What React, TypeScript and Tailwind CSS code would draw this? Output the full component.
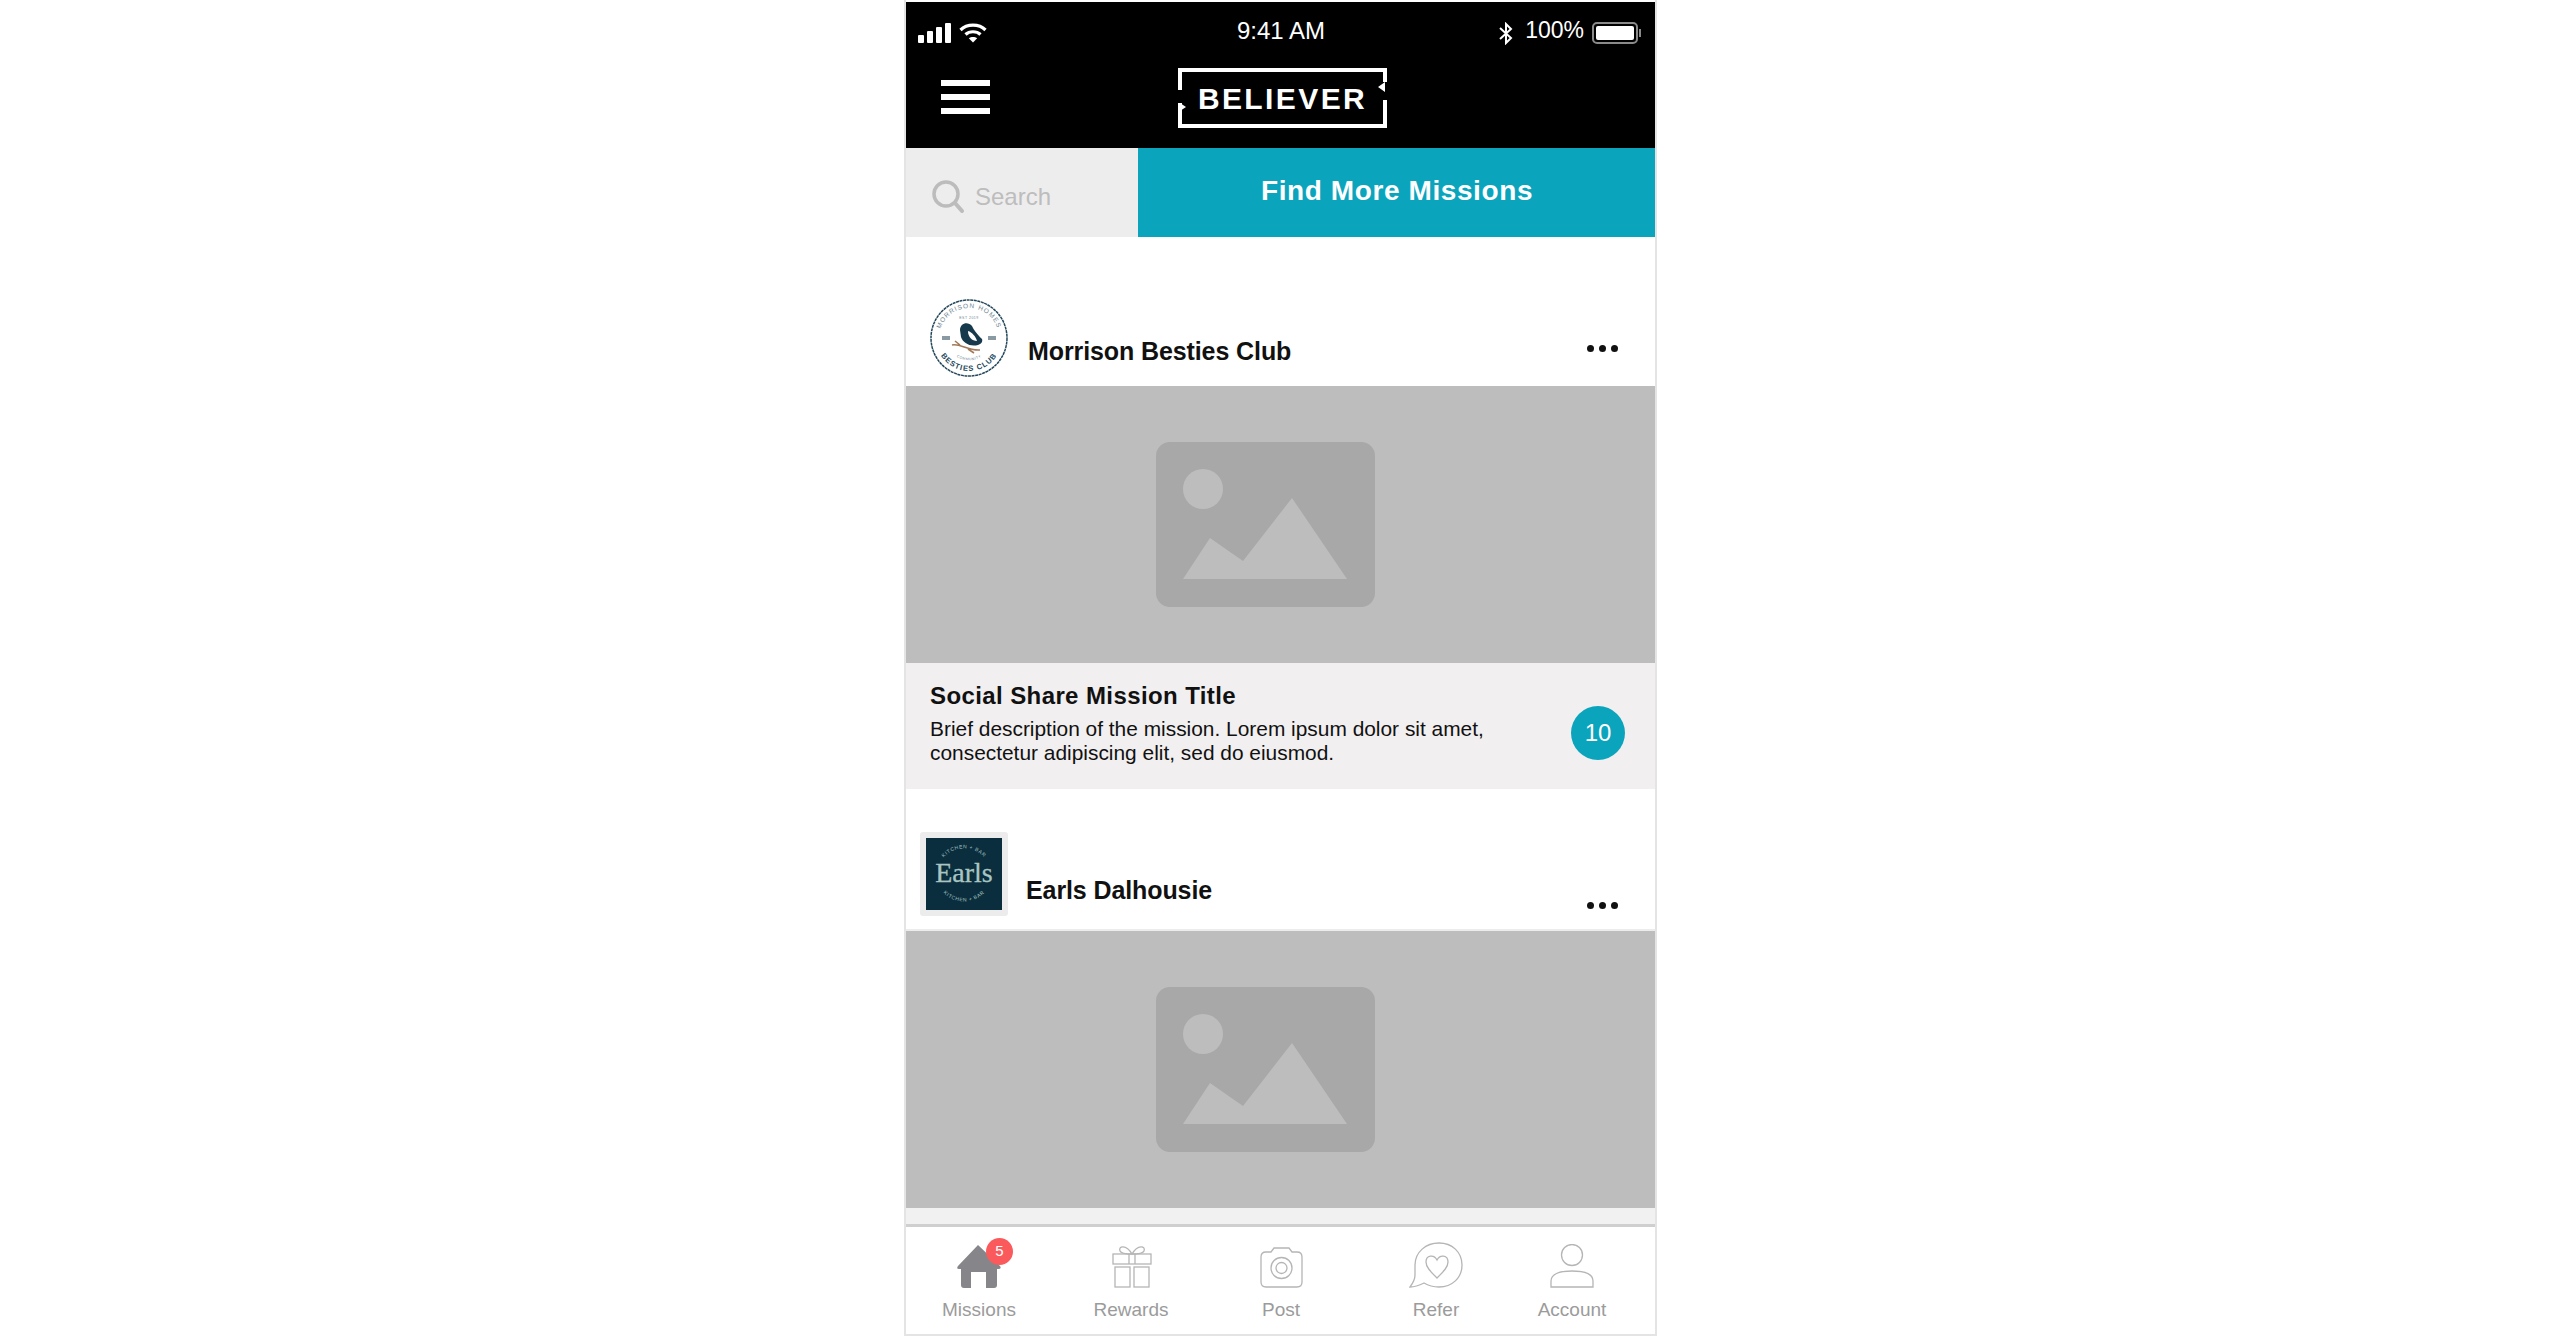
import React from "react";

const sans = "font-['Liberation_Sans',Arial,sans-serif]";

const Dots = () => (
  <div className="flex gap-[5px]">
    <span className="w-[7px] h-[7px] rounded-full bg-[#111]" />
    <span className="w-[7px] h-[7px] rounded-full bg-[#111]" />
    <span className="w-[7px] h-[7px] rounded-full bg-[#111]" />
  </div>
);

const Placeholder = () => (
  <div className="h-[277px] bg-[#bdbdbd] flex items-center pl-[250px] shrink-0">
    <svg width="219" height="165" viewBox="0 0 219 165">
      <rect width="219" height="165" rx="14" fill="#a8a8a8" />
      <circle cx="47" cy="47" r="20" fill="#bdbdbd" />
      <path d="M27 137 L54 96 L87 119 L136 56 L191 137 Z" fill="#bdbdbd" />
    </svg>
  </div>
);

const BirdLogo = () => (
  <svg width="78" height="78" viewBox="0 0 78 78" className="shrink-0">
    <defs>
      <path id="arcTop" d="M9 39 A30 30 0 0 1 69 39" />
      <path id="arcBottom" d="M6 39 A33 33 0 0 0 72 39" />
      <path id="arcInner" d="M17 45 A23 23 0 0 0 61 45" />
    </defs>
    <circle cx="39" cy="39" r="38" fill="#fff" stroke="#23475a" strokeWidth="1.5" strokeDasharray="3 0.6" />
    <text fontSize="6.5" fill="#6d8592" letterSpacing="1" fontFamily="Liberation Sans">
      <textPath href="#arcTop" startOffset="50%" textAnchor="middle">MORRISON HOMES</textPath>
    </text>
    <text fontSize="7.5" fontWeight="700" fill="#23475a" letterSpacing="1" fontFamily="Liberation Sans">
      <textPath href="#arcBottom" startOffset="50%" textAnchor="middle">BESTIES CLUB</textPath>
    </text>
    <text fontSize="3.5" fill="#6d8592" letterSpacing="0.5" fontFamily="Liberation Sans">
      <textPath href="#arcInner" startOffset="50%" textAnchor="middle">COMMUNITY</textPath>
    </text>
    <text x="39" y="20" fontSize="3.5" fill="#6d8592" textAnchor="middle" letterSpacing="0.5" fontFamily="Liberation Sans">EST 2019</text>
    <path d="M30 31 C30 24 38 22 42 27 C44 31 46 34 52 40 C53 43 51 45 48 46 C40 48 33 44 31 38 Z" fill="#16394c" />
    <path d="M38 32 C42 33 46 38 47 42 C42 42 38 38 38 32 Z" fill="#fff" />
    <path d="M22 46 C30 44 38 52 50 51 M30 46 L25 42 M38 50 L44 54" stroke="#a07a58" strokeWidth="1.6" fill="none" />
    <rect x="12" y="37" width="8" height="4" fill="#8a9aa3" />
    <rect x="58" y="37" width="8" height="4" fill="#8a9aa3" />
  </svg>
);

const EarlsLogo = () => (
  <div className="w-[88px] h-[84px] bg-[#ececec] rounded-[3px] flex items-center justify-center shrink-0">
    <svg width="76" height="72" viewBox="0 0 76 72">
      <defs>
        <path id="earlsTop" d="M12 30 A27 27 0 0 1 64 30" />
        <path id="earlsBottom" d="M10 42 A29 29 0 0 0 66 42" />
      </defs>
      <rect width="76" height="72" fill="#0a2e3e" />
      <text fontSize="5" fill="#a9c5c2" letterSpacing="0.6" fontFamily="Liberation Sans">
        <textPath href="#earlsTop" startOffset="50%" textAnchor="middle">KITCHEN + BAR</textPath>
      </text>
      <text fontSize="5" fill="#a9c5c2" letterSpacing="0.6" fontFamily="Liberation Sans">
        <textPath href="#earlsBottom" startOffset="50%" textAnchor="middle">KITCHEN + BAR</textPath>
      </text>
      <text x="38" y="44" fontSize="28" fill="#a9c5c2" stroke="#a9c5c2" strokeWidth="0.3" textAnchor="middle" fontFamily="Liberation Serif">Earls</text>
    </svg>
  </div>
);

const HomeIcon = () => (
  <svg width="46" height="44" viewBox="0 0 46 44">
    <path d="M22 1 L44 22 Q46 25 42 25 L41 25 L41 41 Q41 44 38 44 L30 44 L30 28 L15 28 L15 44 L8 44 Q5 44 5 41 L5 25 L3 25 Q0 25 2 22 Z" fill="#86868a" />
  </svg>
);

const GiftIcon = () => (
  <svg width="40" height="44" viewBox="0 0 40 44" fill="none" stroke="#b5b5b5" strokeWidth="1.3" className="ml-[2px]">
    <rect x="1" y="10" width="38" height="10" />
    <rect x="3" y="23" width="15" height="20" />
    <rect x="22" y="23" width="15" height="20" />
    <path d="M17 10 V20 M23 10 V20" />
    <path d="M20 10 C14 0 6 2 8 7 C9 10 16 10 20 10 C24 10 31 10 32 7 C34 2 26 0 20 10 Z" />
  </svg>
);

const CameraIcon = () => (
  <svg width="43" height="41" viewBox="0 0 43 41" fill="none" stroke="#b5b5b5" strokeWidth="1.3">
    <path d="M6 5 H11 L14 1 H29 L32 5 H37 Q42 5 42 10 V35 Q42 40 37 40 H6 Q1 40 1 35 V10 Q1 5 6 5 Z" />
    <circle cx="21.5" cy="21" r="10.5" />
    <circle cx="21.5" cy="21" r="5.5" />
  </svg>
);

const ReferIcon = () => (
  <svg width="54" height="46" viewBox="0 0 54 46" fill="none" stroke="#b5b5b5" strokeWidth="1.3">
    <path d="M30 1 C43 1 53 10 53 23 C53 36 43 45 30 45 C24 45 20 44 15 41 C11 43 6 45 1 45 C4 41 6 37 6 33 C6 30 6 27 6 23 C6 10 17 1 30 1 Z" />
    <path d="M28 36 C21 29 17 25 17 20 C17 13 25 12 28 18 C31 12 39 13 39 20 C39 25 35 29 28 36 Z" />
  </svg>
);

const AccountIcon = () => (
  <svg width="44" height="44" viewBox="0 0 44 44" fill="none" stroke="#b5b5b5" strokeWidth="1.3">
    <ellipse cx="22" cy="11" rx="10.5" ry="10.5" />
    <path d="M1 43 V37 C1 30 10 27 22 27 C34 27 43 30 43 37 V43 Z" />
  </svg>
);

const tabs = [
  { label: "Missions", icon: <HomeIcon />, width: "w-[146px]" },
  { label: "Rewards", icon: <GiftIcon />, width: "w-[158px]" },
  { label: "Post", icon: <CameraIcon />, width: "w-[142px]" },
  { label: "Refer", icon: <ReferIcon />, width: "w-[168px]" },
  { label: "Account", icon: <AccountIcon />, width: "w-[104px]" },
];

export default function App() {
  return (
    <div className={`${sans} w-[2560px] h-[1336px] bg-white overflow-hidden`}>
      <div className="ml-[904px] w-[753px] h-[1336px] border-x-2 border-b-2 border-[#e4e4e4] flex flex-col">
        {/* status bar + nav */}
        <div className="mt-[2px] h-[146px] bg-black text-white flex flex-col shrink-0">
          <div className="h-[48px] flex items-center justify-between pl-[12px] pr-[14px] pt-[14px] relative">
            <div className="flex items-center gap-[8px]">
              <svg width="33" height="20" viewBox="0 0 33 20" fill="#fff">
                <rect x="0" y="12" width="6" height="8" rx="1" />
                <rect x="9" y="8" width="6" height="12" rx="1" />
                <rect x="18" y="4" width="6" height="16" rx="1" />
                <rect x="27" y="0" width="6" height="20" rx="1" />
              </svg>
              <svg width="28" height="20" viewBox="0 0 28 20" fill="none" stroke="#fff" strokeWidth="3.2">
                <path d="M1.5 7 C8 0.5 20 0.5 26.5 7" />
                <path d="M6.5 11.5 C10.5 7.8 17.5 7.8 21.5 11.5" />
                <path d="M14 19.5 L9.8 15.3 C12 13.4 16 13.4 18.2 15.3 Z" fill="#fff" stroke="none" />
              </svg>
            </div>
            <span className="absolute left-[331px] top-[15px] text-[24px] leading-[28px]">9:41 AM</span>
            <div className="flex items-center">
              <svg width="16" height="23" viewBox="0 0 16 23" fill="none" stroke="#fff" strokeWidth="2" className="mr-[11px]">
                <path d="M2 6 L13 16 L8 21 V2 L13 7 L2 17" />
              </svg>
              <span className="text-[23px] leading-[24px] mr-[8px] -mt-[6px]">100%</span>
              <div className="w-[46px] h-[22px] border-2 border-[#8a8a8a] rounded-[5px] p-[2px]">
                <div className="w-full h-full bg-white rounded-[2px]" />
              </div>
              <div className="w-[2px] h-[8px] bg-[#8a8a8a] ml-[1px]" />
            </div>
          </div>
          <div className="flex-1 flex items-center relative">
            <div className="ml-[35px] w-[49px] flex flex-col gap-[8px] -mt-[5px]">
              <span className="h-[6px] bg-white" />
              <span className="h-[6px] bg-white" />
              <span className="h-[6px] bg-white" />
            </div>
            <div className="absolute left-[272px] top-[18px] w-[209px] h-[60px]">
              <svg width="209" height="60" viewBox="0 0 209 60" className="absolute inset-0" fill="none" stroke="#fff" strokeWidth="4">
                <path d="M2 22 V2 H207 V14 M207 32 V58 H2 V35" />
                <path d="M207 14 L200 19 L207 24 Z M2 35 L8 39 L2 43 Z" fill="#fff" stroke="none" />
              </svg>
              <div className="h-[60px] flex items-center justify-center text-[30px] font-bold tracking-[2.4px]">BELIEVER</div>
            </div>
          </div>
        </div>

        {/* search + cta */}
        <div className="h-[89px] flex shrink-0">
          <div className="w-[232px] bg-[#ededed] flex items-center pl-[26px] pt-[8px] gap-[11px]">
            <svg width="32" height="33" viewBox="0 0 32 33" fill="none" stroke="#bcbcbc" strokeWidth="3.5">
              <circle cx="14" cy="14" r="12" />
              <path d="M23 23 L30 31" strokeLinecap="round" strokeWidth="4" />
            </svg>
            <span className="text-[24px] text-[#bdbdbd]">Search</span>
          </div>
          <div className="flex-1 bg-[#0ba4bd] flex items-center justify-center text-white text-[28px] font-bold tracking-[0.6px] pb-[3px] pl-[1px]">
            Find More Missions
          </div>
        </div>

        {/* mission list */}
        <div className="flex-1 min-h-0 overflow-hidden flex flex-col">
          <div className="h-[149px] flex items-end pl-[24px] pr-[37px] pb-[9px] shrink-0">
            <BirdLogo />
            <span className="ml-[20px] text-[25px] leading-[30px] font-bold text-[#111] tracking-[-0.1px] mb-[11px]">Morrison Besties Club</span>
            <span className="ml-auto mb-[25px]"><Dots /></span>
          </div>
          <Placeholder />
          <div className="h-[126px] bg-[#f1eff0] pl-[24px] pr-[30px] flex items-center justify-between shrink-0">
            <div className="text-[#111] -mt-[6px]">
              <div className="text-[24px] leading-[30px] font-bold tracking-[0.4px]">Social Share Mission Title</div>
              <div className="mt-[6px] text-[20.9px] leading-[24.5px]">
                Brief description of the mission. Lorem ipsum dolor sit amet,<br />
                consectetur adipiscing elit, sed do eiusmod.
              </div>
            </div>
            <div className="w-[54px] h-[54px] mt-[14px] rounded-full bg-[#0ba4bd] text-white text-[24px] flex items-center justify-center">10</div>
          </div>
          <div className="h-[142px] flex items-end pl-[14px] pr-[37px] pb-[13px] border-b-2 border-[#ececec] shrink-0">
            <EarlsLogo />
            <span className="ml-[18px] text-[25px] leading-[30px] font-bold text-[#111] tracking-[-0.1px] mb-[11px]">Earls Dalhousie</span>
            <span className="ml-auto mb-[7px]"><Dots /></span>
          </div>
          <Placeholder />
          <div className="flex-1 bg-[#f1f1f1]" />
        </div>

        {/* tab bar */}
        <div className="h-[110px] bg-white border-t-[3px] border-[#cfcfcf] flex shrink-0">
          {tabs.map((tab) => (
            <div key={tab.label} className={`${tab.width} relative flex flex-col items-center`}>
              <div className="h-[48px] mt-[13px] flex items-end justify-center">{tab.icon}</div>
              <span className="mt-[10px] text-[19px] leading-[24px] text-[#9b9b9b]">{tab.label}</span>
              {tab.label === "Missions" && (
                <span className="absolute left-[80px] top-[11px] w-[27px] h-[27px] rounded-full bg-[#fb5a5c] text-white text-[15px] flex items-center justify-center">5</span>
              )}
            </div>
          ))}
        </div>
      </div>
    </div>
  );
}
